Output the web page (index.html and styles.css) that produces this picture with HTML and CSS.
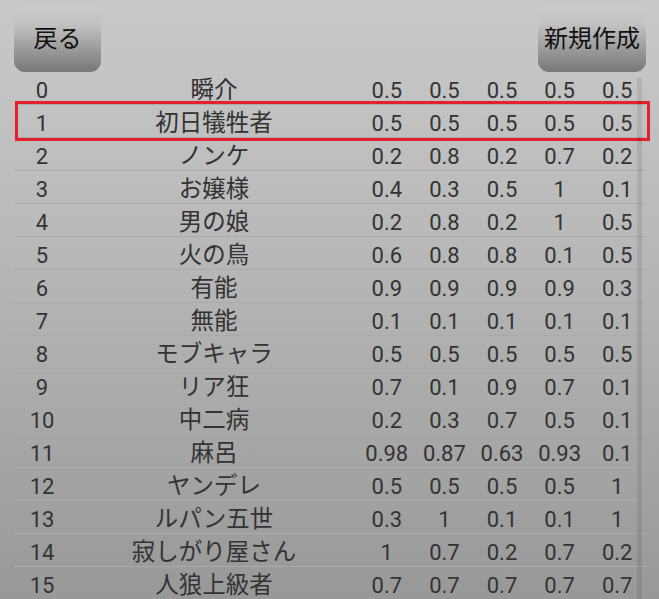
FILE: index.html
```html
<!DOCTYPE html>
<html lang="ja">
<head>
<meta charset="utf-8">
<link rel="stylesheet" href="styles.css">
</head>
<body>
<div class="screen">
  <div class="toolbar">
    <div class="btn btn-back">戻る</div>
    <div class="btn btn-new">新規作成</div>
  </div>
  <div class="list">
    <div class="row"><span class="idx">0</span><span class="name">瞬介</span><span class="v">0.5</span><span class="v">0.5</span><span class="v">0.5</span><span class="v">0.5</span><span class="v">0.5</span></div>
    <div class="row selected"><span class="idx">1</span><span class="name">初日犠牲者</span><span class="v">0.5</span><span class="v">0.5</span><span class="v">0.5</span><span class="v">0.5</span><span class="v">0.5</span></div>
    <div class="row"><span class="idx">2</span><span class="name">ノンケ</span><span class="v">0.2</span><span class="v">0.8</span><span class="v">0.2</span><span class="v">0.7</span><span class="v">0.2</span></div>
    <div class="row"><span class="idx">3</span><span class="name">お嬢様</span><span class="v">0.4</span><span class="v">0.3</span><span class="v">0.5</span><span class="v">1</span><span class="v">0.1</span></div>
    <div class="row"><span class="idx">4</span><span class="name">男の娘</span><span class="v">0.2</span><span class="v">0.8</span><span class="v">0.2</span><span class="v">1</span><span class="v">0.5</span></div>
    <div class="row"><span class="idx">5</span><span class="name">火の鳥</span><span class="v">0.6</span><span class="v">0.8</span><span class="v">0.8</span><span class="v">0.1</span><span class="v">0.5</span></div>
    <div class="row"><span class="idx">6</span><span class="name">有能</span><span class="v">0.9</span><span class="v">0.9</span><span class="v">0.9</span><span class="v">0.9</span><span class="v">0.3</span></div>
    <div class="row"><span class="idx">7</span><span class="name">無能</span><span class="v">0.1</span><span class="v">0.1</span><span class="v">0.1</span><span class="v">0.1</span><span class="v">0.1</span></div>
    <div class="row"><span class="idx">8</span><span class="name">モブキャラ</span><span class="v">0.5</span><span class="v">0.5</span><span class="v">0.5</span><span class="v">0.5</span><span class="v">0.5</span></div>
    <div class="row"><span class="idx">9</span><span class="name">リア狂</span><span class="v">0.7</span><span class="v">0.1</span><span class="v">0.9</span><span class="v">0.7</span><span class="v">0.1</span></div>
    <div class="row"><span class="idx">10</span><span class="name">中二病</span><span class="v">0.2</span><span class="v">0.3</span><span class="v">0.7</span><span class="v">0.5</span><span class="v">0.1</span></div>
    <div class="row"><span class="idx">11</span><span class="name">麻呂</span><span class="v">0.98</span><span class="v">0.87</span><span class="v">0.63</span><span class="v">0.93</span><span class="v">0.1</span></div>
    <div class="row"><span class="idx">12</span><span class="name">ヤンデレ</span><span class="v">0.5</span><span class="v">0.5</span><span class="v">0.5</span><span class="v">0.5</span><span class="v">1</span></div>
    <div class="row"><span class="idx">13</span><span class="name">ルパン五世</span><span class="v">0.3</span><span class="v">1</span><span class="v">0.1</span><span class="v">0.1</span><span class="v">1</span></div>
    <div class="row"><span class="idx">14</span><span class="name">寂しがり屋さん</span><span class="v">1</span><span class="v">0.7</span><span class="v">0.2</span><span class="v">0.7</span><span class="v">0.2</span></div>
    <div class="row"><span class="idx">15</span><span class="name">人狼上級者</span><span class="v">0.7</span><span class="v">0.7</span><span class="v">0.7</span><span class="v">0.7</span><span class="v">0.7</span></div>
    <div class="scrollbar"></div>
  </div>
</div>
</body>
</html>
```

FILE: styles.css
```css
html, body {
  margin: 0;
  padding: 0;
  height: 100%;
  overflow: hidden;
}
body {
  font-family: Roboto, "Noto Sans CJK JP", sans-serif;
  background: linear-gradient(#c9c9c9 0%, #b9b9b9 40%, #989898 100%);
}
.screen {
  height: 599px;
  padding: 0 13px 0 14px;
  box-sizing: border-box;
  overflow: hidden;
}
.toolbar {
  display: flex;
  justify-content: space-between;
  padding-top: 4px;
  height: 72px;
  box-sizing: border-box;
}
.btn {
  height: 68px;
  border-radius: 11px;
  background: linear-gradient(#cbcbcb 0%, #c2c2c2 30%, #777777 100%);
  color: #111;
  font-size: 24px;
  display: flex;
  align-items: center;
  justify-content: center;
  box-sizing: border-box;
  padding-bottom: 3px;
}
.btn-back { width: 87px; }
.btn-new { width: 108px; }
.list {
  position: relative;
}
.row {
  display: grid;
  grid-template-columns: 56px 288px repeat(5, 1fr);
  height: 33px;
  padding-top: 3px;
  border-bottom: 1px solid #aaaaaa;
  box-sizing: border-box;
  align-items: start;
  color: #333333;
  font-size: 22px;
  position: relative;
}
.row span {
  text-align: center;
  white-space: nowrap;
  line-height: 32px;
  height: 29px;
}
.row .name {
  font-size: 23.5px;
  line-height: 30px;
}
.selected::after {
  content: "";
  position: absolute;
  left: 1px;
  right: -4px;
  top: -4px;
  bottom: -4px;
  border: 3px solid #e3202b;
}
.scrollbar {
  position: absolute;
  left: 623px;
  top: 6px;
  width: 5px;
  height: 521px;
  background: rgba(0, 0, 0, 0.09);
}
```
